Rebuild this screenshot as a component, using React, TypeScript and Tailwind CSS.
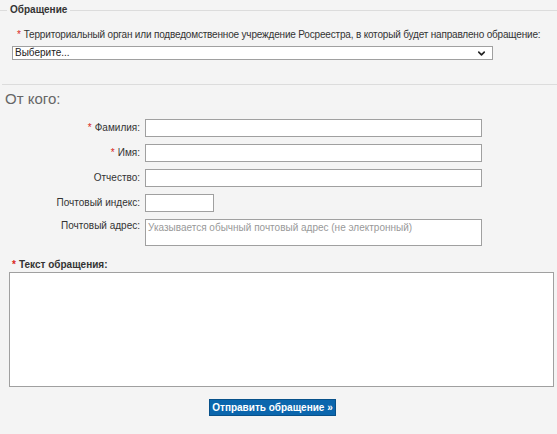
import { ChevronDown } from "lucide-react"

const Req = () => <span className="text-[#d9261c] mr-[3px]">*</span>

interface Row {
    label: string
    required?: boolean
    width: string
    multiline?: boolean
    placeholder?: string
}

const rows: Row[] = [
    { label: "Фамилия:", required: true, width: "w-[337px]" },
    { label: "Имя:", required: true, width: "w-[337px]" },
    { label: "Отчество:", width: "w-[337px]" },
    { label: "Почтовый индекс:", width: "w-[69px]" },
    {
        label: "Почтовый адрес:",
        width: "w-[337px]",
        multiline: true,
        placeholder: "Указывается обычный почтовый адрес (не электронный)",
    },
]

const App = () => {
    return (
        <div className="w-[557px] h-[434px] overflow-hidden bg-[#f4f4f4] text-[10px] leading-[12px] text-[#333] font-['Liberation_Sans',Arial,sans-serif] pt-[4px]">
            <fieldset className="border-0 border-t border-[#dcdcdc] pl-[7px] m-0">
                <legend className="px-[3px] font-bold text-[#333]">Обращение</legend>
                <div className="pl-[10px] mt-[13px] whitespace-nowrap tracking-[-0.18px]">
                    <Req />
                    Территориальный орган или подведомственное учреждение Росреестра, в который будет направлено обращение:
                </div>
                <div className="ml-[5px] mt-[5px] w-[481px] h-[14px] bg-white border border-[#a0a0a0] flex items-center justify-between pl-[2px] pr-[5px]">
                    <span className="text-[#222]">Выберите...</span>
                    <ChevronDown className="w-[11px] h-[11px] text-[#222]" strokeWidth={3.5} />
                </div>
            </fieldset>

            <div className="mt-[24px] ml-[2px] border-t border-[#dcdcdc]" />

            <h2 className="ml-[5px] mt-[5px] text-[15px] leading-[18px] text-[#666] font-normal">От кого:</h2>

            <div className="mt-[11px] flex flex-col gap-[7px]">
                {rows.map((row) => (
                    <div key={row.label} className={`flex ${row.multiline ? "items-start" : "items-center"}`}>
                        <div className={`w-[142px] pr-[2px] text-right text-[#333] ${row.multiline ? "pt-[1px]" : ""}`}>
                            {row.required && <Req />}
                            {row.label}
                        </div>
                        <div
                            className={`ml-[3px] bg-white border border-[#a0a0a0] ${row.width} ${
                                row.multiline ? "h-[27px]" : "h-[18px]"
                            } px-[2px] pt-[2px] text-[#999]`}
                        >
                            {row.placeholder}
                        </div>
                    </div>
                ))}
            </div>

            <div className="ml-[12px] mt-[13px] font-bold text-[#333]">
                <Req />
                Текст обращения:
            </div>
            <div className="ml-[9px] mt-[1px] w-[545px] h-[115px] bg-white border border-[#a0a0a0]" />

            <div className="flex justify-center mt-[12px] pr-[12px]">
                <button className="w-[127px] h-[17px] bg-[#0b66ad] border border-[#08518a] text-white font-bold text-[10px] leading-[15px]">
                    Отправить обращение »
                </button>
            </div>
        </div>
    )
}

export default App
